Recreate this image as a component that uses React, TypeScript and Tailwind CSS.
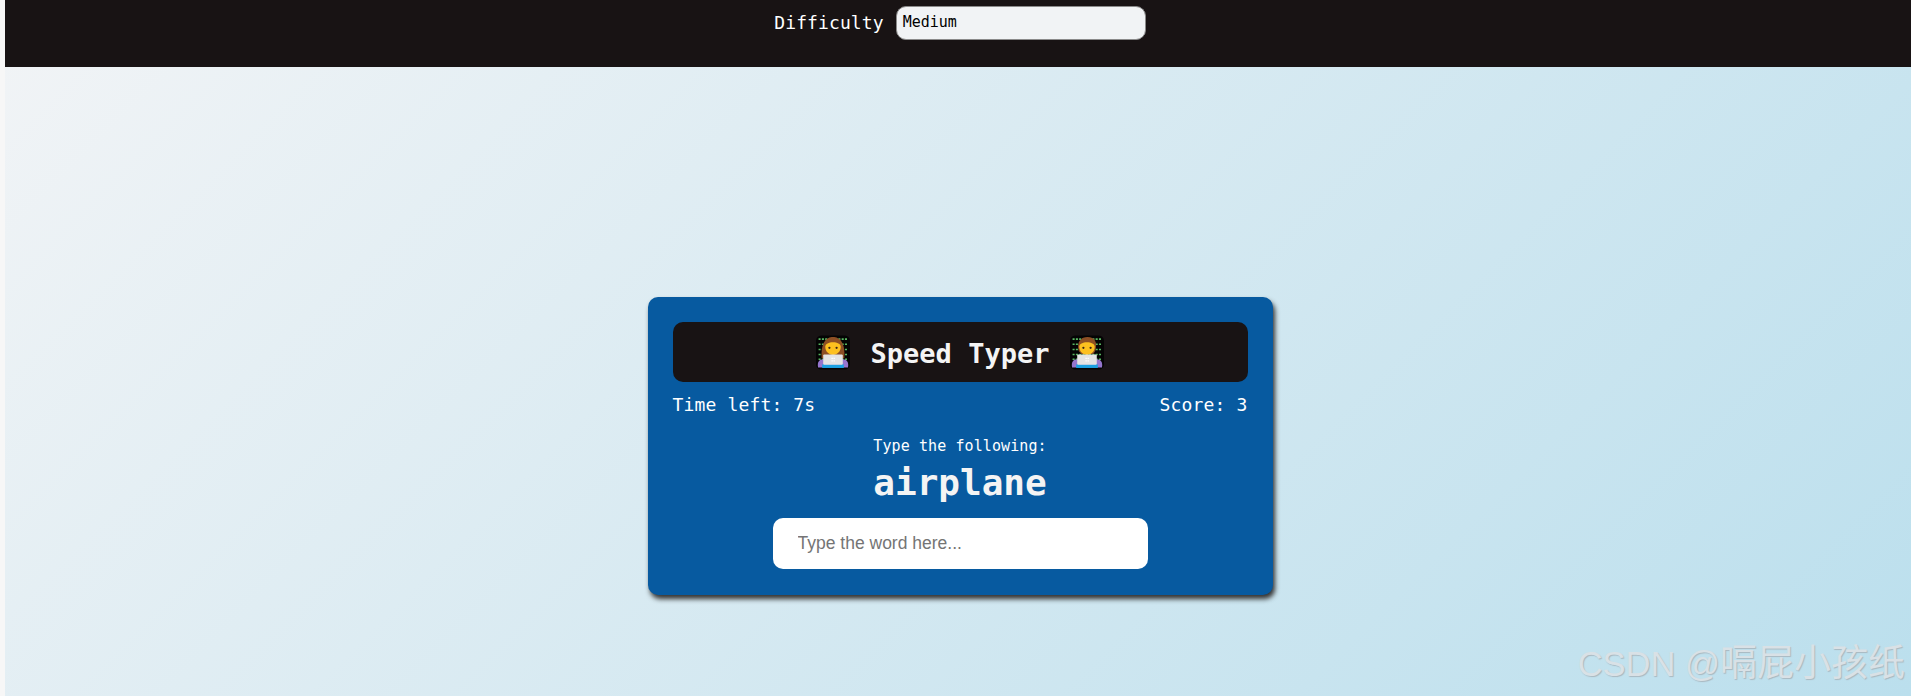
function Coder({ short }: { short?: boolean }) {
  const hair = "#8d4f24";
  return (
    <svg width="34" height="35" viewBox="0 0 33 33" className="shrink-0">
      <rect x="0" y="0" width="33" height="33" rx="5" fill="#040404" />
      <g stroke="#58b861" strokeWidth="1.500" fill="none" strokeDasharray="2 1.200">
        <path d="M2.500 3.500H30.500M2.500 8.500H30.500M2.500 13.500H30.500M2.500 18.500H30.500M2.500 23H30.500" />
      </g>
      {short ? (
        <path d="M8.500 15C6 6 11 1.500 17 1.500c7 0 10 5 7.500 13.500l-2 3H11z" fill={hair} />
      ) : (
        <path d="M5.500 22C4.500 7 10 1.500 16.500 1.500S28.500 7 27.500 22z" fill={hair} />
      )}
      <path d="M9 11c0-3 3.500-4.500 7.500-4.500S24 8 24 11c0 4.500-3.500 8-7.500 8S9 15.500 9 11z" fill="#fdc01f" />
      <circle cx="13" cy="12" r="1.100" fill="#3b2516" />
      <circle cx="20" cy="12" r="1.100" fill="#3b2516" />
      <path d="M2 31c-1-5 1-8 5-8h19c4 0 6 3 5 8z" fill="#9575cd" />
      <rect x="6" y="28" width="21" height="3.500" fill="#1ba1e2" />
      <rect x="7" y="18.500" width="19" height="10" rx="1" fill="#e4e4e4" />
      <path d="M15 21.500h1.300v1.300H15zM17 21.500h1.300v1.300H17zM15 24h1.300v1.300H15zM17 24h1.300v1.300H17z" fill="#fff" />
    </svg>
  );
}

export default function App() {
  return (
    <div className="relative h-[696px] w-[1911px] overflow-hidden bg-[#f7f7f7] pl-[5px] font-['DejaVu_Sans_Mono',monospace]">
      <div className="h-full bg-[linear-gradient(135deg,#f2f4f6,#bbdfed)]">
        <header className="flex h-[67px] items-start justify-center gap-[12px] bg-[#181314] pl-[4px] pt-[6px]">
          <label className="flex h-[33px] items-center text-[18px] tracking-[0.1px] text-white">Difficulty</label>
          <div className="flex h-[34px] w-[250px] items-center rounded-[10px] border border-[#8a8a8a] bg-[#f1f3f5] px-[6px] pb-[1px] text-[15px] text-black">
            Medium
          </div>
        </header>
        <main className="flex justify-center pl-[4px] pt-[230px]">
          <div className="flex h-[298px] w-[625px] flex-col rounded-[10px] bg-[#075aa0] p-[25px] text-white shadow-[2px_4px_5px_#333]">
            <div className="flex h-[60px] items-center justify-center gap-[21px] rounded-[10px] bg-[#181314]">
              <Coder />
              <h1 className="pt-[4px] text-[27px] font-bold text-[#f4f4f4]">Speed Typer</h1>
              <Coder short />
            </div>
            <div className="mt-[10px] flex justify-between text-[18px] leading-[26px] tracking-[0.15px]">
              <span>Time left: 7s</span>
              <span>Score: 3</span>
            </div>
            <p className="mt-[17px] text-center text-[15px] leading-[22px] tracking-[0.1px]">Type the following:</p>
            <p className="mt-[1px] text-center text-[36px] font-bold leading-[50px] text-[#f4f4f4]">airplane</p>
            <input
              placeholder="Type the word here..."
              className="mx-auto mt-[10px] h-[51px] w-[375px] rounded-[10px] bg-white px-[25px] font-['Liberation_Sans',sans-serif] text-[17.500px] text-black outline-none placeholder:text-[#757575]"
            />
          </div>
        </main>
      </div>
      <div className="absolute right-[6px] top-[642px] whitespace-nowrap font-['Liberation_Sans','Noto_Sans_CJK_SC',sans-serif] text-[37px] leading-[44px] text-[#d9e1e6] [text-shadow:1px_1px_1px_#a9b8c0]">
        <span className="text-[34.500px]">CSDN @</span>嗝屁小孩纸
      </div>
    </div>
  );
}
